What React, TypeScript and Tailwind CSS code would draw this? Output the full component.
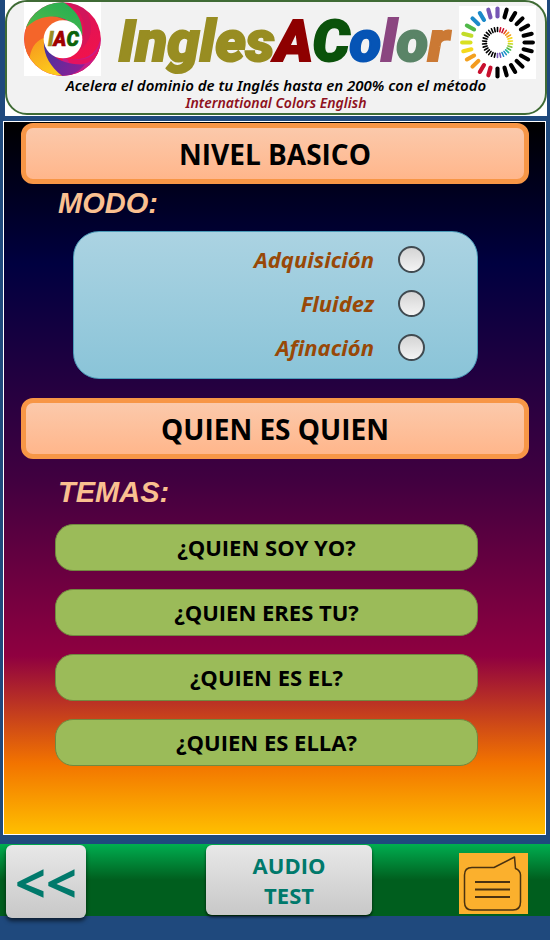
const outerColors = [
  "#7656b5", "#000", "#000", "#000", "#000", "#000", "#000", "#000",
  "#000", "#000", "#000", "#000", "#000", "#c8102e", "#c8102e", "#f39a1f",
  "#f3a01f", "#f4d91c", "#d9e021", "#c3dc2a", "#4fb848", "#1c8ac9", "#1c8ac9", "#7656b5",
];

const innerColors = [
  "#000", "#c8102e", "#c8102e", "#e8501f", "#f39a1f", "#f3a01f", "#f4d91c", "#f4d91c",
  "#c3dc2a", "#8cc63f", "#4fb848", "#1cb5a0", "#1c8ac9", "#1c8ac9", "#7656b5", "#7656b5",
  "#000", "#000", "#000", "#000", "#000", "#000", "#000", "#000",
  "#000", "#000", "#000", "#000", "#000", "#000",
];

const brand = [
  { text: "Ingles", className: "text-[#988d22] [-webkit-text-stroke:2px_#988d22]" },
  { text: "A", className: "text-[#8e0000] [-webkit-text-stroke:2px_#8e0000]" },
  { text: "C", className: "text-[#0b520b] [-webkit-text-stroke:2px_#0b520b]" },
  { text: "o", className: "text-[#0654b5] [-webkit-text-stroke:2px_#0654b5]" },
  { text: "l", className: "text-[#8b4680] [-webkit-text-stroke:2px_#8b4680]" },
  { text: "o", className: "text-[#5a8467] [-webkit-text-stroke:2px_#5a8467]" },
  { text: "r", className: "text-[#cb7934] [-webkit-text-stroke:2px_#cb7934]" },
];

const modes = ["Adquisición", "Fluidez", "Afinación"];
const topics = ["¿QUIEN SOY YO?", "¿QUIEN ERES TU?", "¿QUIEN ES EL?", "¿QUIEN ES ELLA?"];

function SwirlLogo() {
  return (
    <svg className="h-[74px] w-[77px] shrink-0 bg-white" viewBox="12 3 231 222" role="img" aria-label="IAC">
      <defs>
        <clipPath id="disc">
          <ellipse cx="127.500" cy="114" rx="115" ry="110" />
        </clipPath>
        <linearGradient id="crimson" x1="0" y1="0" x2="0.300" y2="1">
          <stop offset="0" stopColor="#d3145e" />
          <stop offset="1" stopColor="#f3124a" />
        </linearGradient>
        <linearGradient id="green" x1="0" y1="1" x2="1" y2="0">
          <stop offset="0" stopColor="#5bb947" />
          <stop offset="1" stopColor="#1fae54" />
        </linearGradient>
        <linearGradient id="yellow" x1="0" y1="0" x2="0.500" y2="1">
          <stop offset="0" stopColor="#f58a1f" />
          <stop offset="1" stopColor="#fcc91c" />
        </linearGradient>
        <linearGradient id="violet" x1="0" y1="0" x2="1" y2="0.600">
          <stop offset="0" stopColor="#3a36a0" />
          <stop offset="1" stopColor="#8a1f96" />
        </linearGradient>
      </defs>
      <g clipPath="url(#disc)">
        <rect x="12" y="3" width="231" height="222" fill="url(#crimson)" />
        <path d="M243 105C235 160 195 185 130 172L105 230H250Z" fill="#c81c86" />
        <path d="M243 125C232 165 195 185 140 172L150 188C190 198 225 180 240 150Z" fill="#e5125f" />
        <path d="M72 105C72 150 115 195 195 190C175 215 150 228 120 226C85 205 62 165 72 105Z" fill="url(#violet)" />
        <path d="M12 160C25 130 45 105 76 95C62 145 82 190 128 226H12Z" fill="url(#yellow)" />
        <path d="M0 75C40 35 95 35 140 60C90 62 72 95 72 110C45 120 30 145 28 180L0 190Z" fill="#f4652a" />
        <path d="M5 95C15 30 75 -5 130 3C165 25 190 55 187 105C165 60 120 42 85 47C55 50 28 65 5 95Z" fill="url(#green)" />
        <path d="M130 0C175 15 198 50 190 95C187 125 178 142 165 155C215 130 230 75 190 15Z" fill="#c3175f" opacity="0.500" />
      </g>
      <ellipse cx="129" cy="115" rx="58" ry="57" fill="#fff" />
      <text x="130" y="136" textAnchor="middle" fontSize="58" fontWeight="900" fontStyle="italic" fontFamily="Roboto, sans-serif" strokeWidth="2">
        <tspan fill="#988d22" stroke="#988d22">I</tspan>
        <tspan fill="#a00000" stroke="#a00000">A</tspan>
        <tspan fill="#0b620b" stroke="#0b620b">C</tspan>
      </text>
    </svg>
  );
}

function ColorWheel() {
  return (
    <svg className="h-[73px] w-[77px] shrink-0 bg-white" viewBox="-38.500 -36.500 77 73" aria-hidden="true">
      {outerColors.map((color, i) => (
        <line key={i} x1="0" y1="-26" x2="0" y2="-34" stroke={color} strokeWidth="4" strokeLinecap="round" transform={`scale(1.040 1) rotate(${i * 15})`} />
      ))}
      {innerColors.map((color, i) => (
        <line key={i} x1="0" y1="-11" x2="0" y2="-15" stroke={color} strokeWidth="1.600" strokeLinecap="round" transform={`rotate(${i * 12})`} />
      ))}
    </svg>
  );
}

function Banner({ children }: { children: string }) {
  return (
    <h2 className="mr-4 ml-[17px] flex h-[61px] items-center justify-center rounded-xl border-[5px] border-[#f79646] bg-linear-to-b from-[#fbc9ab] to-[#ffb68b] text-[28px] font-bold text-black">
      {children}
    </h2>
  );
}

export default function App() {
  return (
    <div className="flex min-h-screen flex-col bg-[#1f497d] font-['Open_Sans','Noto_Sans',sans-serif]">
      {/* Header */}
      <header className="mr-[3px] ml-[5px] bg-white pb-px">
        <div className="h-[115px] rounded-[22px] border-2 border-[#3f6b35] bg-[#f2f2f2]">
          <div className="flex h-[74px] items-start justify-between pr-[9px] pl-[17px]">
            <SwirlLogo />
            <h1 className="pt-1 pl-2 font-[Roboto,sans-serif] text-[58px] leading-[70px] font-black whitespace-nowrap italic">
              {brand.map((part, i) => (
                <span key={i} className={part.className}>{part.text}</span>
              ))}
            </h1>
            <div className="pt-1">
              <ColorWheel />
            </div>
          </div>
          <p className="text-center font-['Noto_Sans',sans-serif] text-[15px] leading-[18px] font-semibold whitespace-nowrap text-black italic">
            Acelera el dominio de tu Inglés hasta en 200% con el método
          </p>
          <p className="text-center font-['Noto_Sans',sans-serif] text-sm leading-[18px] font-semibold text-[#8e1020] italic">
            International Colors English
          </p>
        </div>
      </header>

      {/* Main Content */}
      <main className="mt-[5px] mr-1 ml-[3px] border border-white bg-[linear-gradient(to_bottom,#000000_0%,#000040_20%,#400040_50%,#8f0040_75%,#f27300_90%,#ffbf00_100%)] pt-px pb-[68px]">
        <Banner>NIVEL BASICO</Banner>

        <fieldset>
          <legend className="ml-[54px] h-[47px] font-['Liberation_Sans',sans-serif] text-[29px] leading-[38px] font-bold text-[#fac090] italic">MODO:</legend>
          <div className="mr-[67px] ml-[69px] rounded-[26px] border border-[#4a9ab8] bg-linear-to-b from-[#abd3e2] to-[#8ac4d8] pt-[5px] pr-[52px] pb-[9px]">
            {modes.map((mode) => (
              <label key={mode} className="flex h-11 items-center justify-end gap-6 text-[22px] font-bold text-[#984807] italic">
                {mode}
                <input
                  type="radio"
                  name="modo"
                  className="size-[27px] appearance-none rounded-full border-2 border-[#404a50] bg-linear-to-b from-[#d4d4d4] to-[#f4f4f4] checked:from-[#404a50] checked:to-[#404a50]"
                />
              </label>
            ))}
          </div>
        </fieldset>

        <div className="mt-[19px]">
          <Banner>QUIEN ES QUIEN</Banner>
        </div>

        <h3 className="ml-[54px] h-[65px] pt-[14px] font-['Liberation_Sans',sans-serif] text-[29px] leading-[38px] font-bold text-[#fac090] italic">TEMAS:</h3>
        <div className="mr-[67px] ml-[51px] flex flex-col gap-[18px]">
          {topics.map((topic) => (
            <button key={topic} type="button" className="h-[47px] rounded-[18px] border border-[#71893f] bg-[#9bbb59] text-[22px] font-bold text-black">
              {topic}
            </button>
          ))}
        </div>
      </main>

      {/* Footer */}
      <footer className="mt-[9px] flex h-[72px] items-start bg-[linear-gradient(to_bottom,#00ae50_0%,#005e1e_50%,#005e1e_100%)] pt-px pr-[22px] pl-[6px]">
        <button
          type="button"
          aria-label="Atrás"
          className="h-[73px] w-20 rounded-md bg-linear-to-b from-[#e8e8e8] to-[#c8c8c8] text-[54px] leading-[68px] font-bold text-[#00796b] shadow-[0_3px_4px_rgba(0,0,0,0.6)]"
        >
          &lt;&lt;
        </button>
        <button
          type="button"
          className="ml-[23%] h-[70px] w-[166px] rounded-md bg-linear-to-b from-[#e8e8e8] to-[#c8c8c8] text-[22px] leading-[30px] font-bold text-[#00796b] shadow-[0_2px_3px_rgba(0,0,0,0.7)]"
        >
          AUDIO
          <br />
          TEST
        </button>
        <button type="button" aria-label="Notas" className="mt-2 ml-auto h-[61px] w-[69px] bg-[#fbb02d]">
          <svg className="size-full" viewBox="0 0 69 61" fill="none" stroke="#4a3210" strokeWidth="1.500" strokeLinejoin="round">
            <path d="M13 14.500H35L55.500 4L56.500 15.500C60 17 61.500 19 61.500 22V49C61.500 54 59 57 54 57H13C8 57 5.500 54 5.500 49V22C5.500 17 8 14.500 13 14.500Z" />
            <path d="M16 29H51M16 36.500H51M16 44H51" strokeWidth="2" />
          </svg>
        </button>
      </footer>
    </div>
  );
}
